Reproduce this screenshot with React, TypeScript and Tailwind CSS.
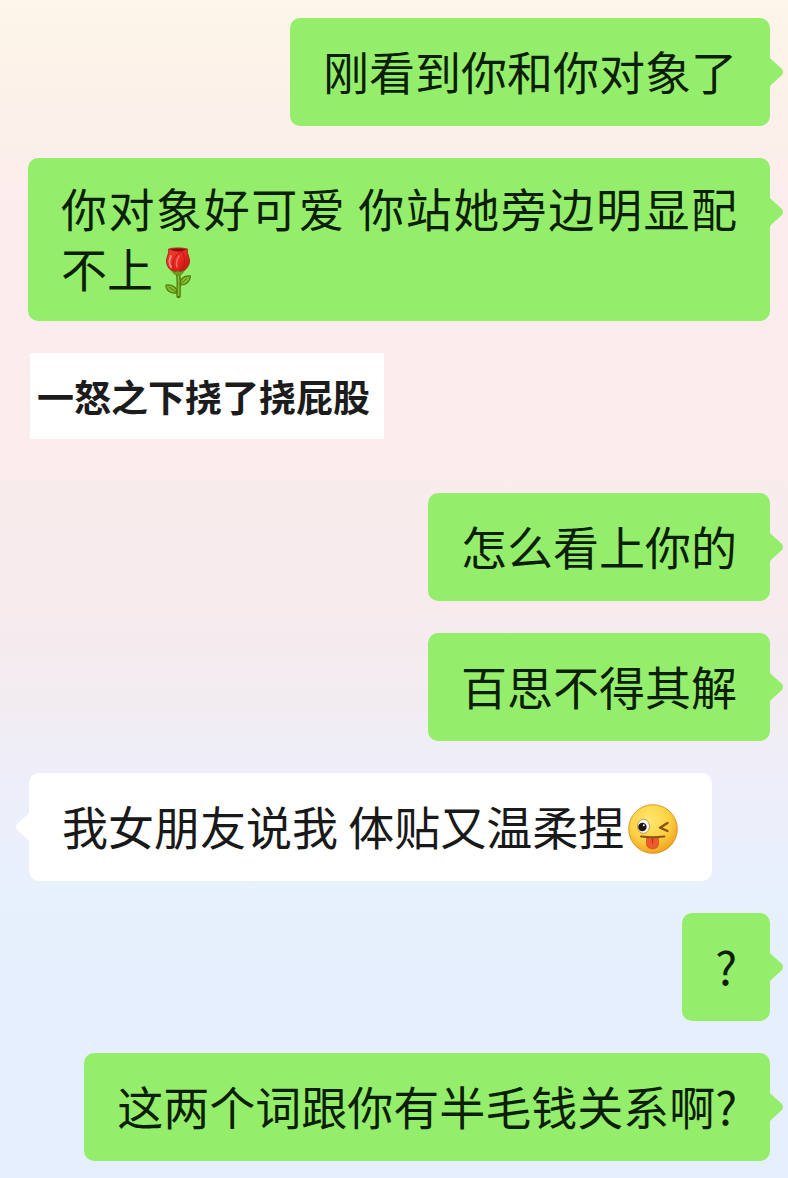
import type { ReactNode } from 'react';
import clsx from 'clsx';

type Message = {
  id: number;
  from: 'me' | 'friend';
  kind?: 'text' | 'sticker';
  body: ReactNode;
  className?: string;
};

function Rose() {
  return (
    <svg role="img" aria-label="玫瑰" viewBox="0 0 50 52" className="-mt-3 -mb-2 inline-block h-[52px] w-[50px] align-middle">
      <defs>
        <linearGradient id="petal" x1="0" y1="0" x2="1" y2="1">
          <stop offset="0" stopColor="#ef3f33" />
          <stop offset="0.5" stopColor="#ea2a22" />
          <stop offset="1" stopColor="#b90f0c" />
        </linearGradient>
      </defs>
      <path d="M25 23 C26 33 26 42 25.500 49" fill="none" stroke="#4a7a0a" strokeWidth="4.400" strokeLinecap="round" />
      <path d="M25 23 C26 33 26 42 25.500 49" fill="none" stroke="#8fbd3a" strokeWidth="1.800" />
      <path d="M27 38 C27 31 32 28 37.500 29 C37 35 33 38 27 38 Z" fill="#86b92f" stroke="#4a7a0a" strokeWidth="1.200" />
      <path d="M24 46 C18 47 13 44 13 38 C19 37 24 40 24 46 Z" fill="#86b92f" stroke="#4a7a0a" strokeWidth="1.200" />
      <path d="M28 37 L34 31 M23 45 L16 40" stroke="#4a7a0a" strokeWidth="0.800" />
      <path
        d="M15.500 2 C20 0.500 30 0.500 34.500 2 C33.500 6 36 9 36.500 13 C37 19 32 25 25 26 C18 25 13 20 13.500 13 C14 9 16.500 6 15.500 2 Z"
        fill="url(#petal)"
        stroke="#a3160f"
        strokeWidth="0.800"
      />
      <path d="M17 2.500 C21 5 29 5 33 2.500 C29 1.300 21 1.300 17 2.500 Z" fill="#8d0f0c" />
      <path d="M29 4 C22 8 18 15 21 24 M29 4 C32 10 33 18 28 25" fill="none" stroke="#b81a15" strokeWidth="0.900" />
      <path d="M18 9 C16 13 16 17 18 20" fill="none" stroke="#ff9187" strokeWidth="1.800" strokeLinecap="round" />
      <path d="M26 9 C24 12 23 16 24 20" fill="none" stroke="#fb6a60" strokeWidth="1.500" strokeLinecap="round" />
      <path d="M19 23 L22 25 L25 24 L28 25 L31 23 C30 27 28 28 25 28 C22 28 20 27 19 23 Z" fill="#719f22" stroke="#4a7a0a" strokeWidth="0.600" />
    </svg>
  );
}

function WinkTongue() {
  return (
    <svg role="img" aria-label="调皮" viewBox="0 0 52 52" className="-mt-4 -mb-2 mr-px ml-[2px] inline-block size-[52px] align-middle">
      <defs>
        <radialGradient id="face" cx="0.42" cy="0.32" r="0.7">
          <stop offset="0" stopColor="#ffe970" />
          <stop offset="0.6" stopColor="#fdd043" />
          <stop offset="1" stopColor="#f0a01c" />
        </radialGradient>
      </defs>
      <circle cx="27" cy="26" r="24.300" fill="url(#face)" stroke="#d98d20" strokeWidth="0.900" />
      <ellipse cx="17.500" cy="23.300" rx="6" ry="7" fill="#fff" stroke="#b98a3a" strokeWidth="0.900" />
      <circle cx="16.400" cy="24" r="4.200" fill="#1c1511" />
      <circle cx="17.800" cy="22.300" r="1" fill="#fff" />
      <path d="M41.500 20 L34 24.700 L41.500 28" fill="none" stroke="#8a5310" strokeWidth="2.400" strokeLinecap="round" strokeLinejoin="round" />
      <path d="M20.500 34.500 H32.500 V41 C32.500 47.500 20.500 47.500 20.500 41 Z" fill="#ee5a2d" stroke="#d2421c" strokeWidth="0.600" />
      <path d="M26.500 35 V40" stroke="#bd3517" strokeWidth="1.300" strokeLinecap="round" />
      <path d="M15 33.500 C22 34.500 31 34.500 38.500 33.500" fill="none" stroke="#8a5310" strokeWidth="1.900" strokeLinecap="round" />
    </svg>
  );
}

const messages: Message[] = [
  { id: 1, from: 'me', body: '刚看到你和你对象了' },
  { id: 2, from: 'me', body: <>你对象好可爱 你站她旁边明显配不上<Rose /></>, className: 'pt-[19px] pb-6 text-justify' },
  { id: 3, from: 'friend', kind: 'sticker', body: '一怒之下挠了挠屁股' },
  { id: 4, from: 'me', body: '怎么看上你的' },
  { id: 5, from: 'me', body: '百思不得其解' },
  { id: 6, from: 'friend', body: <>我女朋友说我 体贴又温柔捏<WinkTongue /></> },
  { id: 7, from: 'me', body: '?' },
  { id: 8, from: 'me', body: '这两个词跟你有半毛钱关系啊?' },
];

function Bubble({ message }: { message: Message }) {
  const mine = message.from === 'me';
  return (
    <div
      className={clsx(
        'relative max-w-[742px] rounded-[10px] px-[33px] text-[46px] leading-[60px]',
        mine ? 'bg-[#95ee6b] text-[#0b1f06]' : 'bg-white text-[#191919]',
        message.className ?? 'pt-[22px] pb-[26px]',
      )}
    >
      {message.body}
      <svg
        aria-hidden="true"
        viewBox="0 0 15 32"
        className={clsx(
          'absolute top-[38px] h-8 w-[15px]',
          mine ? 'left-full -ml-px text-[#95ee6b]' : 'right-full -mr-px -scale-x-100 text-white',
        )}
      >
        <path d="M0 0 C1 2 2 3 3 4 L13 13 Q15 16 13 19 L3 28 C2 29 1 30 0 32 Z" fill="currentColor" />
      </svg>
    </div>
  );
}

function Sticker({ message }: { message: Message }) {
  return (
    <div className="mb-[22px] ml-px bg-white px-[7px] py-4 text-[37px] leading-[54px] font-bold text-[#1c1c1c]">
      <span className="mr-[7px]">{message.body}</span>
    </div>
  );
}

export default function App() {
  return (
    <main
      lang="zh-CN"
      className="min-h-screen bg-[linear-gradient(180deg,#fef6e8_0%,#fcf1e9_8%,#fbedec_17%,#faecec_40%,#f7ebee_52%,#f1edf2_61%,#eeeefa_66%,#e7f1fc_76%,#e6effd_84%,#e6effd_100%)] pt-[18px] pb-[17px] font-['Noto_Sans_CJK_SC',sans-serif]"
    >
      <ol className="flex flex-col gap-8 pr-[18px] pl-[27px]">
        {messages.map((m) => (
          <li key={m.id} className={clsx('flex', m.from === 'me' ? 'justify-end' : 'justify-start pl-[2px]')}>
            {m.kind === 'sticker' ? <Sticker message={m} /> : <Bubble message={m} />}
          </li>
        ))}
      </ol>
    </main>
  );
}
